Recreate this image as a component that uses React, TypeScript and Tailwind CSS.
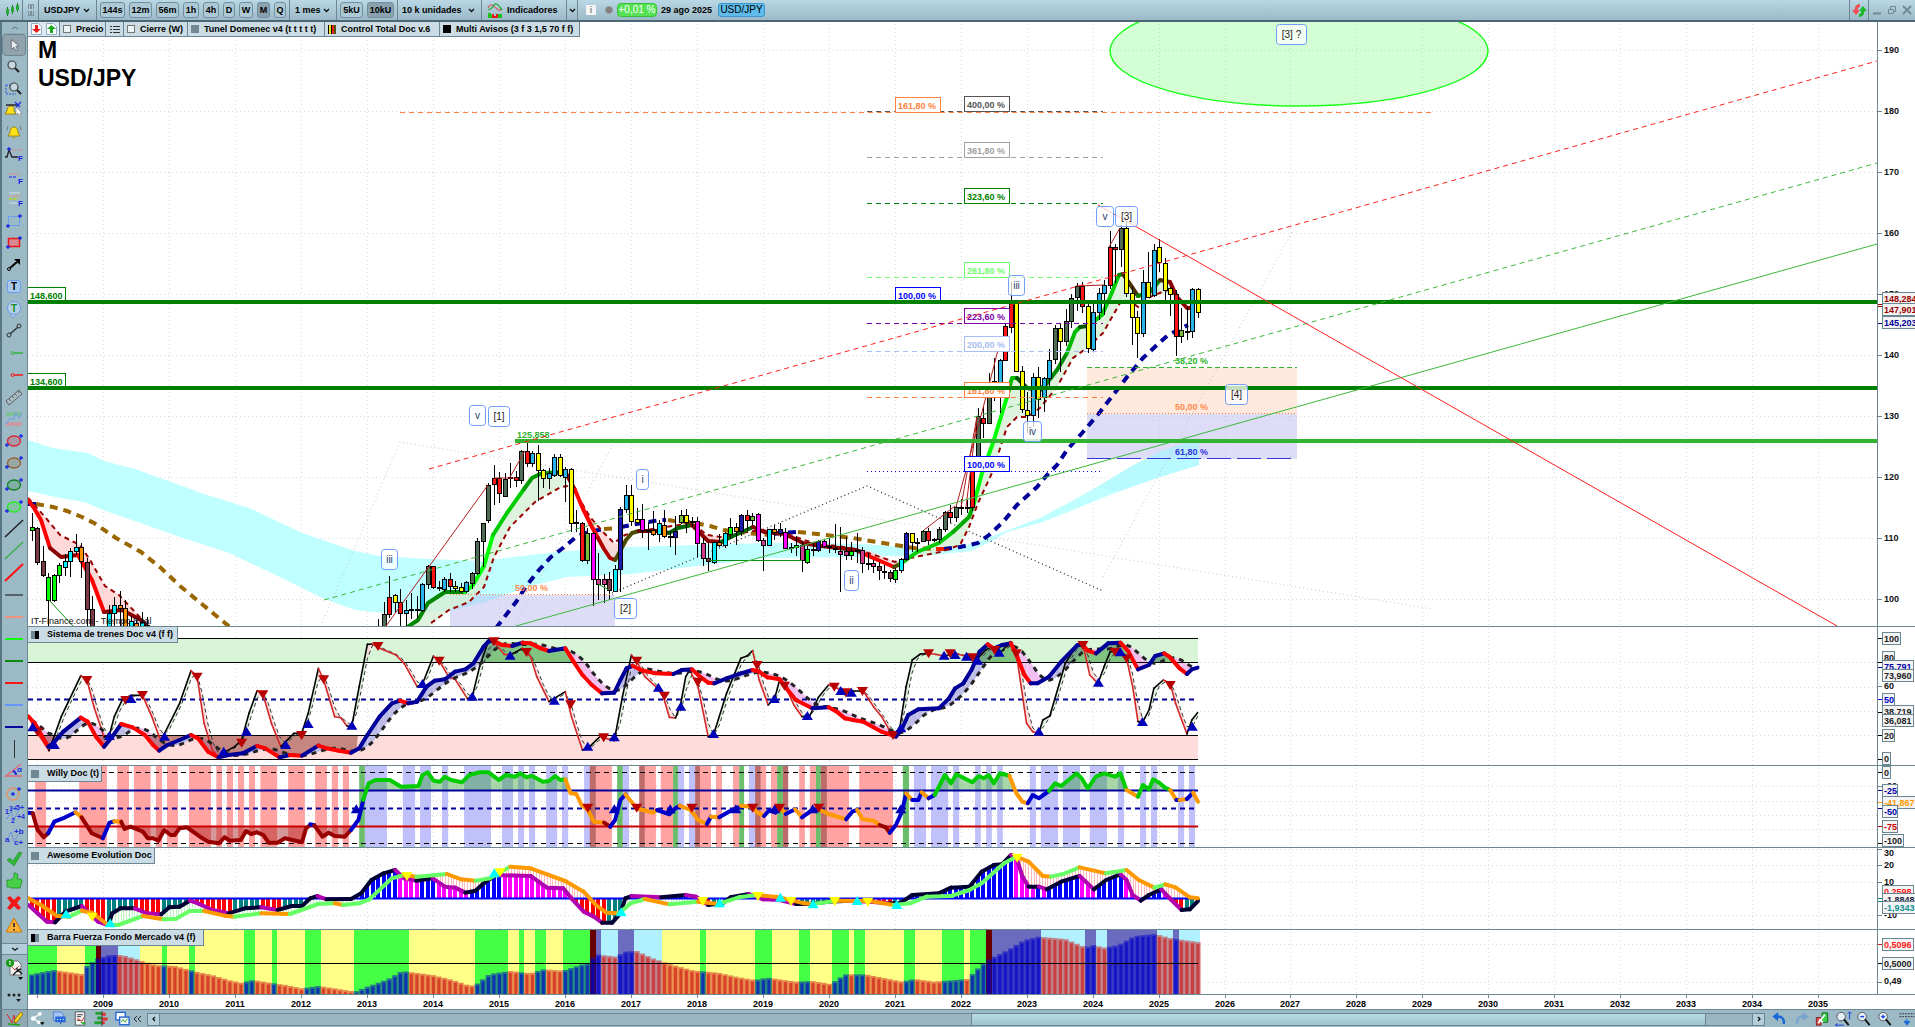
/**
 * Trading workspace: toolbar, drawing tools, price chart and four indicator panes
 */

import type { ReactNode } from 'react';

type Point = [number, number];

const LEFT = 28;
const AXIS_LEFT = 1877;
const MONTH = 5.5;
const JAN_2008 = 37.4;
const LAST_X = 1198;
const monthX = (i: number) => JAN_2008 + MONTH * i;
const yearX = (i: number) => Math.round(JAN_2008 + 65.95 * i);

/* ---------- price data ---------- */

const CANDLE_COLORS: Record<string, string> = {
  l: '#00ff00',
  m: '#7a3b46',
  c: '#00f0ff',
  o: '#ff9000',
  g: '#4f6b53',
  r: '#ff1414',
  y: '#ffff00',
  b: '#28b4ea',
  k: '#000000',
  v: '#7cbf3f',
  f: '#ff00ff',
  p: '#d13c8c',
  n: '#1b1bb0',
};

// month index, then "high top bottom low color" per candle
const CANDLES: [number, string][] = [
  [
    -1,
    '513 527 530 541 l|527 528 562 565 m|546 561 575 577 m|573 577 600 626 l|574 575 600 602 l|563 565 575 583 l|554 561 567 576 c|548 551 561 577 c|534 547 551 555 c|543 547 561 578 o|558 562 609 626 m|596 609 640 640 m',
  ],
  [
    13,
    '605 613 640 640 c|597 605 613 640 c|591 605 608 640 o|600 608 640 640 o|616 621 640 640 c|620 623 640 640 o|612 622 640 640 c|617 625 640 640 m',
  ],
  [
    62,
    '619 630 640 640 k|602 614 640 640 g|576 597 614 618 r|594 595 602 612 y|589 602 613 628 r|600 610 613 626 b|593 609 610 619 k|596 609 610 619 k|583 584 610 612 b|565 566 584 589 g|566 566 587 589 r|581 587 588 591 k|577 579 589 592 b|573 579 586 592 r|581 586 588 592 y|583 587 591 593 y|581 582 591 593 b|572 573 583 589 g|538 541 573 575 g|523 523 541 567 g|483 485 520 523 g|465 478 484 505 r|472 478 493 503 r|473 479 496 497 g|463 477 478 488 k|471 477 480 487 r|450 451 480 484 g|443 451 463 467 r|451 453 463 467 b|445 453 470 501 y|469 470 478 488 y|468 473 478 489 b|454 457 475 477 b|454 457 475 477 y|467 469 477 502 b|468 469 523 532 y|510 522 523 532 k|522 523 560 562 r|528 533 560 564 v|532 533 579 606 f|553 579 584 600 p|574 579 584 603 p|572 579 590 600 m|565 569 591 592 c|507 509 569 592 n|485 495 509 513 b|485 495 521 526 y|508 519 522 524 y|504 519 530 538 f|522 530 531 550 k|511 530 534 536 o|520 523 534 542 c|510 525 536 538 o|531 536 537 547 k|516 531 537 555 n|510 515 522 524 v|509 515 522 533 y|517 521 522 527 k|517 521 543 557 f|538 543 558 566 p|543 558 561 571 m|542 542 562 564 c|534 542 545 547 o|532 533 545 548 c|518 527 534 539 l|523 527 531 545 o|514 515 531 536 n|510 515 520 530 r|513 516 520 525 v|513 514 540 542 f|538 540 545 571 p|529 529 545 546 c|525 529 532 540 o|523 529 533 537 n|528 532 548 549 f|543 547 548 553 k|536 545 547 556 l|542 545 560 572 p|546 549 562 564 l|543 549 550 556 k|540 541 550 552 n|539 541 546 548 f|538 546 547 553 o|524 548 549 553 o|527 551 554 592 p|537 551 555 560 p|542 551 555 560 l|533 550 551 563 k|547 550 563 573 p|553 563 564 570 k|560 563 566 573 p|562 566 570 580 m|565 571 572 579 k|570 572 578 582 m|568 570 579 583 l|558 559 570 573 c|532 533 559 561 n|533 533 542 552 y|538 542 543 552 k|530 531 541 542 g|528 531 540 545 r|538 539 540 542 b|527 529 539 543 g|511 512 529 532 g|505 512 517 523 r|506 507 517 522 g|499 507 508 515 k|500 507 508 513 k|455 466 507 511 r|408 416 466 470 g|407 418 423 438 r|373 382 423 424 g|358 381 382 401 k|359 360 391 413 b|323 326 360 361 r|282 302 327 333 r|302 303 371 372 y|366 371 409 413 y|392 410 415 433 y|373 377 415 427 b|367 377 399 418 y|377 378 397 412 b|349 360 378 387 b|325 328 359 364 g|324 328 341 372 y|309 321 341 346 g|294 298 321 328 g|283 286 297 311 g|282 286 306 313 r|303 306 348 353 y|303 312 349 351 b|288 293 312 320 b|280 285 293 315 b|231 247 285 289 r|244 247 249 283 r|225 228 249 267 g|221 228 293 297 y|287 293 317 345 y|311 317 333 358 y|270 282 333 337 b|252 282 297 298 y|244 250 295 297 b|239 247 262 272 y|258 263 290 300 y|287 288 294 316 y|290 294 336 356 r|308 330 336 343 v|307 331 332 340 k|288 289 331 338 b|288 289 312 318 y',
  ],
];

const FAST_MA: [string, string][] = [
  ['#ff0000', '28,500 34,508 41,520 50,548'],
  ['#8b0000', '50,548 61,557 78,555'],
  ['#ff0000', '78,555 92,580 104,612'],
  ['#8b0000', '104,612 122,610 141,620 149,628'],
  ['#008800', '403,630 418,620 428,603 445,592 465,592'],
  ['#00ff00', '465,592 473,585 484,566 493,535'],
  ['#00cc00', '493,535 507,513 524,489'],
  ['#009900', '524,489 532,478 540,474 556,472'],
  ['#005500', '556,472 567,475'],
  ['#8b0000', '567,475 575,490'],
  ['#ff0000', '575,490 583,509 592,527 598,538'],
  ['#b00000', '598,538 604,549 610,558 615,560'],
  ['#4a4a00', '615,560 618,555 626,540 632,533 639,531'],
  ['#6b0000', '639,531 660,531 669,533'],
  ['#006600', '669,533 678,528 692,525'],
  ['#8b0000', '692,525 697,530 708,541 721,542'],
  ['#006600', '721,542 731,537 753,527'],
  ['#8b0000', '753,527 764,532 785,534 803,543 821,546 856,550 862,553'],
  ['#ff0000', '862,553 871,557 894,567'],
  ['#4a4a00', '894,567 900,564'],
  ['#00cc00', '900,564 906,560 917,552 939,543 953,532'],
  ['#00aa00', '953,532 969,517 974,503'],
  ['#00ff00', '974,503 982,473 993,443 1007,397'],
  ['#00bb00', '1007,397 1012,378 1017,378'],
  ['#005500', '1017,378 1027,388 1040,390 1047,383'],
  ['#008800', '1047,383 1057,370 1067,353'],
  ['#00bb00', '1067,353 1075,332 1080,327'],
  ['#005500', '1080,327 1088,326'],
  ['#00cc00', '1088,326 1102,315 1110,297 1119,275'],
  ['#008800', '1119,275 1123,274'],
  ['#4a3000', '1123,274 1132,287 1138,296'],
  ['#008800', '1138,296 1150,292 1160,280'],
  ['#4a3000', '1160,280 1170,282'],
  ['#8b0000', '1170,282 1177,297 1187,308 1193,308'],
];

const SLOW_MA = [
  '28,498 45,517 60,535 80,545 90,560 105,586 119,595 135,612 150,628',
  '431,623 449,610 469,602 484,587 494,557 510,527 535,502 561,487 567,486 580,500 590,517 604,533 614,543 625,535 639,531 692,523 707,535 721,537 740,533 762,530 790,535 810,542 856,549 895,562 910,558 940,552 960,545 969,527 978,503 992,473 1007,427 1017,417 1027,417 1040,408 1057,387 1073,358 1087,348 1103,333 1120,303 1133,303 1138,307 1150,297 1167,290 1173,292 1180,303',
];

const MA_FILLS: [string, string][] = [
  ['#ffd0d0', '28,500 41,520 50,548 61,557 78,555 92,580 104,612 122,610 149,628 150,628 135,612 119,595 105,586 90,560 80,545 60,535 45,517'],
  ['#d6f0d6', '403,630 418,620 428,603 445,592 465,592 484,566 493,535 524,489 540,474 567,475 567,486 561,487 535,502 510,527 494,557 484,587 469,602 449,610 425,630'],
  ['#ffd0d0', '567,475 583,509 604,549 615,560 622,545 614,543 604,533 590,517 580,498'],
  ['#ffd0d0', '697,527 708,541 721,542 731,537 721,536 707,535'],
  ['#ffd0d0', '856,550 871,557 894,567 902,560 895,562 870,551'],
  ['#d6f0d6', '906,560 939,543 969,517 974,503 993,443 1007,397 1012,378 1017,378 1027,388 1047,383 1067,353 1080,327 1088,326 1102,315 1123,274 1138,296 1133,303 1120,303 1103,333 1087,348 1073,358 1057,387 1040,408 1027,417 1017,417 1007,427 992,473 978,503 969,527 960,545 940,552'],
  ['#d6f0d6', '1138,296 1150,292 1160,280 1170,282 1173,292 1150,297'],
];

const TUNNEL: [string, string][] = [
  ['#996600', '36,504 53,507 67,511 82,517 94,523 116,538 141,552 161,568 180,586 214,614 231,628'],
  ['#000099', '28,504 37,504'],
  ['#000099', '496,628 516,602 527,585 539,570 551,557 563,548 576,537 588,532 604,529'],
  ['#996600', '604,529 618,528'],
  ['#000099', '621,527 631,525 660,520 666,520'],
  ['#996600', '668,520 674,521 689,522 710,526 724,530 746,533 769,535'],
  ['#000099', '774,534 781,533 797,532'],
  ['#996600', '798,532 817,534 853,538 889,544 914,548 935,549'],
  ['#ee2200', '936,549 944,549'],
  ['#000099', '944,549 960,547 978,543 989,535 1003,522 1017,505 1037,487 1047,475 1057,465 1067,450 1083,432 1100,412 1117,390 1127,377 1143,358 1157,345 1168,335 1188,325'],
];

const CYAN_BAND =
  '28,440 53,448 88,453 104,461 135,469 171,482 204,494 249,508 302,533 355,551 380,556 429,559 482,561 522,556 567,551 631,547 767,543 817,543 864,544 903,547 939,551 974,543 1003,532 1040,518 1070,502 1097,487 1130,467 1157,453 1199,438 1199,465 1160,477 1117,492 1073,510 1040,523 1007,532 992,541 971,551 935,555 889,556 864,557 767,558 689,567 631,574 567,577 527,587 486,602 449,611 384,613 355,610 322,598 286,580 229,553 180,537 143,524 106,511 84,502 61,498 28,491';

const FIB_LEVELS = [
  { label: '400,00 %', y: 111, color: '#555555', dash: '5 4' },
  { label: '361,80 %', y: 157, color: '#a0a0a0', dash: '5 4' },
  { label: '323,60 %', y: 203, color: '#008000', dash: '5 4' },
  { label: '261,80 %', y: 277, color: '#70ff70', dash: '5 4' },
  { label: '223,60 %', y: 323, color: '#7b00a8', dash: '5 4' },
  { label: '200,00 %', y: 351, color: '#a9bdf5', dash: '5 4' },
  { label: '161,80 %', y: 397, color: '#ff7f40', dash: '5 4' },
  { label: '100,00 %', y: 471, color: '#0000ff', dash: '1 3' },
];

const WAVES: [string, number, number, number][] = [
  ['[3] ?', 1276, 24, 30],
  ['v', 1096, 206, 17],
  ['[3]', 1115, 206, 22],
  ['iii', 1008, 275, 16],
  ['iv', 1023, 421, 18],
  ['[4]', 1225, 384, 22],
  ['ii', 844, 570, 14],
  ['i', 636, 469, 12],
  ['[2]', 614, 598, 22],
  ['v', 469, 405, 16],
  ['[1]', 488, 406, 21],
  ['iii', 381, 549, 16],
];

/* ---------- indicator data ---------- */

// Indicator series come in two halves, on a grid of 2.45 units per px across and 3 down
const toPoints = (raw: string, ox: number): Point[] =>
  raw.split(' ').map((p) => {
    const [x, y] = p.split(',').map(Number);
    return [ox + x / 2.45, 620 + y / 3];
  });

const series = (a: string, b: string): Point[] => [
  ...toPoints(a, 0).filter((p) => p[0] < 620),
  ...toPoints(b, 600).filter((p) => p[0] >= 620),
];

const sample = (line: Point[]): Point[] => {
  const out: Point[] = [];
  for (let i = -1; i <= 211; i++) {
    const x = monthX(i);
    const k = line.findIndex((p) => p[0] >= x);
    if (k === -1) {
      out.push([x, line[line.length - 1][1]]);
    } else if (k === 0) {
      out.push([x, line[0][1]]);
    } else {
      const [x0, y0] = line[k - 1];
      const [x1, y1] = line[k];
      out.push([x, y0 + ((y1 - y0) * (x - x0)) / (x1 - x0 || 1)]);
    }
  }
  return out;
};

const average = (line: Point[], n: number): Point[] =>
  line.map(([x], i) => {
    const part = line.slice(Math.max(0, i - n + 1), i + 1);
    return [x, part.reduce((sum, p) => sum + p[1], 0) / part.length];
  });

const str = (pts: Point[]) => pts.map((p) => `${p[0].toFixed(1)},${p[1].toFixed(1)}`).join(' ');

const STOCH_FAST = series(
  '70,285 80,315 92,340 120,392 150,290 198,167 213,180 230,260 255,352 268,345 280,290 300,238 322,226 349,226 372,290 390,350 395,360 440,250 468,152 483,170 500,310 520,390 535,410 548,398 575,380 592,360 610,280 630,212 644,222 665,310 688,380 720,340 739,340 755,280 780,145 793,180 820,290 835,293 850,318 862,318 880,200 900,73 912,72 930,85 970,105 990,130 1022,200 1035,192 1062,108 1080,130 1100,172 1115,178 1145,236 1157,230 1175,140 1195,68 1210,65 1235,103 1250,105 1280,85 1300,110 1315,170 1345,245 1385,215 1400,290 1427,390 1440,385 1470,350 1505,362 1525,230 1547,105 1560,120',
  '0,345 35,362 55,230 77,105 90,125 110,170 145,210 155,230 170,292 185,294 198,250 210,170 220,150 240,200 265,350 278,345 310,220 345,115 360,108 374,92 390,180 412,255 428,235 440,180 455,200 475,255 495,290 515,285 535,232 560,195 575,200 600,220 620,213 645,213 670,260 690,290 718,350 735,320 750,200 765,120 785,102 805,100 845,108 870,100 900,110 925,115 945,90 960,80 980,100 1005,65 1020,100 1045,310 1060,335 1075,340 1085,300 1102,288 1140,130 1170,72 1183,72 1200,165 1220,190 1235,140 1250,95 1275,95 1290,115 1305,200 1318,305 1330,305 1345,270 1357,205 1380,180 1397,190 1410,250 1438,342 1450,300 1464,278',
);

const STOCH_SLOW = series(
  '70,290 85,310 118,380 130,370 155,335 198,293 215,305 235,350 255,380 275,350 297,312 325,322 355,345 375,375 390,392 410,375 440,360 468,345 485,355 510,395 535,412 560,405 595,400 630,378 650,385 685,412 710,405 740,407 780,377 800,385 830,392 860,398 880,385 900,345 930,290 960,250 980,242 1000,250 1022,245 1045,200 1065,182 1090,178 1115,155 1140,148 1160,130 1185,80 1197,64 1210,62 1230,75 1255,78 1280,68 1300,70 1325,85 1345,93 1385,85 1405,125 1427,165 1450,195 1475,220 1505,218 1520,180 1535,145 1550,137',
  '35,218 50,180 65,145 80,137 100,150 135,160 180,162 200,150 225,148 245,170 265,188 280,190 310,175 345,160 374,150 390,155 410,172 440,178 460,210 480,240 520,265 560,262 580,275 600,295 620,300 645,305 670,322 690,335 725,350 740,325 755,285 780,268 830,265 855,235 870,205 890,190 910,150 930,95 950,73 965,85 985,75 1007,70 1022,110 1040,165 1055,190 1072,190 1100,170 1130,125 1170,75 1183,75 1195,92 1215,100 1245,70 1275,68 1295,95 1318,148 1345,135 1360,108 1382,100 1395,110 1420,145 1438,162 1450,148 1464,143',
);

const STOCH_DOWN = [
  ...toPoints('92,335 213,180 308,240 349,225 483,170 592,368 644,223 739,345 793,178 926,78 1076,122 1210,64 1290,96 1398,253 1479,352', 0),
  ...toPoints('90,122 158,227 240,185 385,135 452,197 574,200 602,217 643,213 718,345 805,100 858,100 912,112 967,90 1020,100 1183,75 1262,95 1290,115 1397,195', 600),
];
const STOCH_UP = [
  ...toPoints('80,322 133,375 268,348 321,237 403,350 548,395 604,335 700,375 755,312 862,317 1035,192 1157,230 1250,107 1358,242 1440,380 1505,352', 0),
  ...toPoints('143,203 198,260 278,342 427,237 508,288 590,213 616,218 737,325 843,107 870,105 898,110 925,122 978,98 1075,335 1221,188 1275,97 1329,306 1451,320', 600),
];

const BAND_COLORS: Record<string, string> = { r: '#ffa3a3', g: '#6bbf6b', b: '#c0c0fb', d: '#bd6b6b' };
const WILLY_BANDS: [number, string][] = [
  [
    0,
    'r86-113 r194-262 r287-316 r328-369 r382-397 r409-436 r463-517 r530-544 r556-571 r583-598 r610-625 r638-679 r706-747 r772-801 r813-828 r840-855 g880-894 b894-948 b987-1017 b1029-1056 b1083-1098 b1137-1203 b1230-1257 b1269-1284 b1296-1311 b1338-1365 b1377-1392 b1431-1446 d1445-1460 r1460-1499',
  ],
  [
    600,
    'g42-56 b56-71 d96-110 r110-137 r149-179 g179-191 b191-206 b218-233 d233-245 r245-272 r284-299 r326-341 g341-353 b365-380 d380-394 r394-407 r419-434 g434-448 d448-461 r488-502 r514-529 g529-541 d541-556 r556-610 r635-718 g742-757 b769-799 b811-853 b865-880 b919-933 b946-960 b973-987 b1053-1068 b1080-1122 b1134-1176 b1200-1242 b1269-1284 b1323-1338 b1350-1365 b1416-1431 b1443-1458',
  ],
];

const WILLY_COLORS: Record<string, string> = { d: '#990000', b: '#0000cc', o: '#ff9900', g: '#00cc00' };
const WILLY_LINE: [number, string][] = [
  [
    0,
    'b:70,578 80,580|d:80,580 92,630 107,652 118,640|b:118,640 133,605 160,592 185,577|o:185,577 200,592|d:200,592 225,640 252,655|b:252,655 268,608 280,604|o:280,604 297,605|d:297,605 305,627 320,620 350,635 362,655 375,655 388,662 402,630 418,645 428,645 440,625 458,622 490,650 510,665 537,670 550,652 563,662 590,660 603,633 615,642 630,637 645,645 658,668 680,668 698,655 740,667 750,625 760,615|b:760,613 770,616|d:770,616 790,650 805,638 820,648 845,650 860,630|b:860,630 878,600 890,540|g:890,540 903,490 920,480 955,480 983,500 1025,498 1035,465 1048,457 1062,482 1078,485 1090,470 1105,480 1132,487 1150,465 1175,457 1197,457 1222,480 1240,465 1262,470 1275,460 1290,472 1303,467 1330,485 1345,483 1360,468 1373,480 1385,478|o:1385,478 1398,520 1412,522 1425,555 1440,570 1455,605 1480,608|d:1480,608 1495,620|b:1495,620 1507,600 1520,540 1533,523',
  ],
  [
    600,
    'o:62,523 90,565 130,578 140,570|b:140,570 170,583 185,565 195,557|o:195,557 222,570 240,600 262,612|b:262,612 272,590|o:272,590 292,592|b:292,592 320,572 345,560|o:345,557 370,560 388,580 402,588|b:402,588 415,570 430,578 440,560|o:440,560 455,582|b:455,582 478,568|o:478,568 495,592|b:495,592 520,570 540,570|o:540,570 560,582 603,598|b:603,598 618,575 630,570|o:630,570 643,597 670,602 685,615|d:685,615 700,622 710,638|b:710,638 725,615 740,575 750,520|o:750,520 765,540|b:765,540 780,540 788,517|o:788,517 805,535|b:805,535 820,525|g:820,525 845,465 860,490 873,463 890,473 912,487 928,468 940,475 952,465 965,490 980,460 1003,467|o:1003,467 1020,520 1035,545 1048,550|b:1048,550 1060,525 1075,535 1100,513|g:1100,513 1115,490 1130,498 1168,460 1180,475 1195,505 1215,470 1235,460 1262,470 1275,460 1290,510|o:1290,510 1318,530|g:1318,530 1330,495 1345,508 1355,478 1370,488 1385,503 1397,510|o:1397,510 1412,540|b:1412,540 1420,540|o:1420,540 1438,537|b:1438,537 1453,518|o:1453,518 1465,545',
  ],
];
const WILLY_UP = [...toPoints('873,568 1505,568', 0), ...toPoints('172,568 333,568 428,568 521,568 737,568', 600)];
const WILLY_DOWN = [...toPoints('1440,563', 0), ...toPoints('90,563 225,563 374,563 440,563 536,563', 600)];

const AWESOME_FAST = series(
  '70,855 92,880 115,905 135,907 160,875 200,858 215,875 240,905 265,915 275,880 295,865 330,865 360,880 395,883 415,862 440,860 465,842 485,850 520,870 560,880 600,865 640,862 680,870 715,858 740,858 760,835 778,828 800,838 860,837 885,820 910,780 940,760 968,750 990,775 1020,782 1060,775 1090,800 1115,803 1140,818 1165,812 1185,790 1215,765 1300,768 1340,803 1380,805 1400,835 1430,875 1455,890 1475,908 1500,908 1520,885',
  '50,880 62,835 77,828 150,832 210,825 235,830 265,855 300,850 320,832 365,822 400,838 440,840 480,852 510,852 560,845 610,842 660,845 710,850 735,850 765,825 830,820 860,803 905,800 935,755 965,735 985,733 1007,705 1020,712 1035,770 1050,800 1075,800 1095,808 1130,785 1175,768 1190,785 1210,808 1240,780 1275,763 1290,780 1305,825 1325,842 1345,825 1375,808 1400,840 1425,870 1445,868 1465,843',
);
const AWESOME_SLOW = series(
  '70,835 100,855 140,888 170,890 200,872 225,878 265,915 290,915 350,888 400,898 430,897 465,873 500,873 550,887 575,890 640,880 710,882 780,852 820,850 840,855 880,850 905,838 960,775 990,765 1020,770 1095,762 1130,778 1165,782 1200,775 1250,740 1300,745 1385,783 1430,815 1460,855 1485,878 1515,880',
  '50,877 75,850 110,837 170,853 240,845 290,852 340,832 385,825 440,832 500,850 520,852 580,842 660,843 720,855 760,850 800,830 860,828 905,810 935,790 990,730 1020,710 1050,725 1085,768 1105,770 1135,762 1175,742 1240,760 1290,750 1320,780 1358,803 1385,793 1410,802 1445,832 1465,835',
);
const AWESOME_DOWN = [...toPoints('226,890 997,768 1225,757', 0), ...toPoints('252,843 387,828 468,843 575,843 656,845 1022,713', 600)];
const AWESOME_UP = [...toPoints('162,883 270,910 1211,760 1522,877', 0), ...toPoints('293,850 442,833 522,853 630,843 727,855', 600)];

const FORCE_COLORS: Record<string, string> = { g: '#44ff44', y: '#ffff88', d: '#660000', p: '#6b6bc0', c: '#b0f0ff' };
// each entry is a color and where its band ends
const FORCE_BANDS: [number, string][] = [
  [
    0,
    'g140 y208 g235 d247 p289 c343 y397 g409 y463 g478 y598 g625 y666 g679 y747 g786 y867 g1002 y1164 g1245 y1271 g1284 y1311 g1338 y1380 g1446 d1460 p1472 c1514 p1553',
  ],
  [
    600,
    'p83 c152 y245 g260 y380 g421 y488 g514 y568 g610 y622 g649 y745 g772 y838 g892 y906 g946 d960 p1080 c1188 p1215 c1242 p1365 c1404 p1419 c1470',
  ],
];
const FORCE = series(
  '70,1065 130,1050 200,1062 210,1040 240,1015 270,1005 300,1005 340,1020 380,1035 430,1038 480,1055 520,1065 560,1080 590,1088 620,1080 660,1088 700,1095 740,1105 780,1098 820,1105 870,1115 900,1100 950,1078 985,1053 1060,1065 1110,1080 1150,1097 1165,1095 1200,1062 1250,1053 1300,1060 1330,1048 1380,1052 1420,1035 1440,1030 1460,1003 1510,1010',
  '40,1010 60,995 90,993 130,1015 170,1032 230,1052 290,1058 340,1072 380,1080 410,1073 480,1085 520,1083 565,1092 600,1063 650,1063 700,1075 740,1085 770,1077 820,1085 900,1077 930,1040 950,1020 1000,990 1040,960 1075,950 1140,957 1190,982 1210,975 1235,983 1270,975 1310,948 1360,942 1400,955 1470,967',
);

/* ---------- shared chart parts ---------- */

interface PaneProps {
  top: number;
  className: string;
  axis: ReactNode;
  children: ReactNode;
  overlay?: ReactNode;
}

function Pane({ top, className, axis, children, overlay }: PaneProps) {
  return (
    <section className={`flex border-b border-[#6b8792] ${className}`}>
      <div className="relative min-w-0 flex-1 overflow-hidden">
        <svg className="absolute inset-0 h-full w-full" aria-hidden="true">
          <g transform={`translate(${-LEFT} ${-top})`}>{children}</g>
        </svg>
        {overlay}
      </div>
      <div className="w-[38px] shrink-0 overflow-hidden border-l border-[#6b8792]">
        <svg className="block h-full w-full">
          <g transform={`translate(${-AXIS_LEFT - 1} ${-top})`}>{axis}</g>
        </svg>
      </div>
    </section>
  );
}

function PaneTitle({ icon, width, children }: { icon: string; width: string; children: ReactNode }) {
  return (
    <h2
      className={`absolute left-0 top-0 flex h-4 items-center gap-2 border-b border-r border-[#6b8792] bg-[#cbdce4] pl-[3px] text-[9px] font-bold ${width}`}
    >
      <span className={`h-2 w-2 ${icon}`} />
      {children}
    </h2>
  );
}

function Grid({ rows }: { rows: number[] }) {
  return (
    <g stroke="#dcdcdc" strokeDasharray="1 3" shapeRendering="crispEdges">
      {Array.from({ length: 28 }, (_, i) => (
        <line key={i} x1={yearX(i) + 0.5} x2={yearX(i) + 0.5} y1="0" y2="1027" />
      ))}
      {rows.map((y) => (
        <line key={y} x1="28" x2="3000" y1={y + 0.5} y2={y + 0.5} />
      ))}
    </g>
  );
}

function Level({ y, color, width = 1, dash }: { y: number; color: string; width?: number; dash?: string }) {
  return <line x1={LEFT} x2={LAST_X} y1={y + 0.5} y2={y + 0.5} stroke={color} strokeWidth={width} strokeDasharray={dash} />;
}

function Markers({ at, dir, color }: { at: Point[]; dir: 'up' | 'down'; color: string }) {
  return (
    <g fill={color}>
      {at.map(([x, y], i) => (
        <path key={i} d={dir === 'up' ? `M${x - 5.5} ${y + 4}h11l-5.5 -9z` : `M${x - 5.5} ${y - 4}h11l-5.5 9z`} />
      ))}
    </g>
  );
}

// Line that changes color with its direction
function SlopeLine({ line, up, down, width }: { line: Point[]; up: string; down: string; width: number }) {
  return (
    <g fill="none" strokeWidth={width} strokeLinecap="round">
      {line.slice(1).map((p, i) => (
        <line key={i} x1={line[i][0]} y1={line[i][1]} x2={p[0]} y2={p[1]} stroke={p[1] <= line[i][1] ? up : down} />
      ))}
    </g>
  );
}

function Between({ a, b, up, down }: { a: Point[]; b: Point[]; up: string; down: string }) {
  return (
    <g>
      {a.slice(1).map((p, i) => (
        <polygon key={i} points={str([a[i], p, b[i + 1], b[i]])} fill={p[1] <= b[i + 1][1] ? up : down} />
      ))}
    </g>
  );
}

function Tick({ y, label, color = '#111', mark = '#6b8792', dy = 3 }: { y: number; label?: string; color?: string; mark?: string; dy?: number }) {
  return (
    <g>
      <line x1="1877" x2="1882" y1={y + 0.5} y2={y + 0.5} stroke={mark} />
      {label && (
        <text x="1884" y={y + dy} fontSize="9" fontWeight="bold" fill={color}>
          {label}
        </text>
      )}
    </g>
  );
}

function Tag({ y, label, color = '#222', width }: { y: number; label: string; color?: string; width: number }) {
  return (
    <g>
      <rect x="1882.5" y={y + 0.5} width={width} height="12" fill="#f4f4f4" stroke="#6b8792" />
      <text x="1884" y={y + 10} fontSize="9" fontWeight="bold" fill={color}>
        {label}
      </text>
    </g>
  );
}

/* ---------- price pane ---------- */

function Candles() {
  return (
    <g shapeRendering="crispEdges" stroke="#000">
      {CANDLES.flatMap(([start, raw]) =>
        raw.split('|').map((row, k) => {
          const [high, top, bottom, low, color] = row.split(' ');
          const x = Math.round(monthX(start + k));
          return (
            <g key={start + k}>
              <line x1={x + 0.5} x2={x + 0.5} y1={Number(high)} y2={Number(low)} />
              <rect
                x={x - 1.5}
                y={Number(top) + 0.5}
                width="4"
                height={Math.max(1, Number(bottom) - Number(top))}
                fill={CANDLE_COLORS[color]}
              />
            </g>
          );
        }),
      )}
    </g>
  );
}

function PriceBox({ x, y, label, color }: { x: number; y: number; label: string; color: string }) {
  return (
    <g>
      <rect x={x + 0.5} y={y - 15.5} width="45" height="15" fill="#fff" stroke={color} />
      <text x={x + 3} y={y - 4} fontSize="9" fontWeight="bold" fill={color}>
        {label}
      </text>
    </g>
  );
}

function LevelBox({ y, label }: { y: number; label: string }) {
  return (
    <g>
      <rect x="27.5" y={y - 15.5} width="38" height="15" fill="#fff" stroke="#008000" />
      <text x="30" y={y - 4} fontSize="9" fontWeight="bold" fill="#008000">
        {label}
      </text>
    </g>
  );
}

function PriceChart() {
  return (
    <>
      <Grid rows={[50, 111, 172, 233, 294, 355, 416, 477, 538, 599]} />
      <ellipse cx="1299" cy="51" rx="189" ry="55" fill="#00ff00" fillOpacity="0.17" stroke="#19ff19" strokeWidth="1.5" />
      <polygon points={CYAN_BAND} fill="#bfffff" />
      <rect x="450" y="595" width="165" height="32" fill="#b4b4f0" fillOpacity="0.45" />
      <rect x="1087" y="368" width="210" height="46" fill="#ffe9dd" />
      <rect x="1087" y="414" width="210" height="45" fill="#b4b4f0" fillOpacity="0.45" />
      <path d="M1199 438L1157 453L1130 467L1097 487L1117 492L1160 477L1199 465z" fill="#b4f6fd" fillOpacity="0.6" />

      <g fill="none" stroke="#c4c4c4" strokeWidth="1" strokeDasharray="1 3">
        <path d="M322 623L400 442L1433 609" />
        <path d="M515 625L614 443" />
        <path d="M1103 577L1292 232" />
      </g>
      <path d="M612 593L867 486L1103 591" fill="none" stroke="#222" strokeWidth="1.2" strokeDasharray="1 3" />

      {MA_FILLS.map(([color, points], i) => (
        <polygon key={i} points={points} fill={color} fillOpacity="0.8" />
      ))}
      <g fill="none" strokeWidth="4" strokeDasharray="8 6">
        {TUNNEL.map(([color, points], i) => (
          <polyline key={i} points={points} stroke={color} />
        ))}
      </g>
      <g fill="none" stroke="#990000" strokeWidth="2" strokeDasharray="5 4">
        {SLOW_MA.map((points, i) => (
          <polyline key={i} points={points} />
        ))}
      </g>
      <g fill="none" strokeWidth="4" strokeLinecap="round" strokeLinejoin="round">
        {FAST_MA.map(([color, points], i) => (
          <polyline key={i} points={points} stroke={color} />
        ))}
      </g>

      <Candles />

      <g fill="none" stroke="#b01c1c">
        <path d="M386 626L488 485M494 478H516M510 477L525 451M924 530L955 506M956 507L982 412L998 350M961 507L977 416M966 507L977 418M1076 286L1104 285M1109 247L1120 228" />
      </g>
      <g fill="none" stroke="#109010">
        <path d="M49 600L73 626M598 584L609 590M710 560.5H802" />
      </g>

      <line x1="400" x2="1433" y1="112.5" y2="112.5" stroke="#ff7f40" strokeDasharray="5 4" />
      {FIB_LEVELS.map(({ label, y, color, dash }) => (
        <g key={y}>
          <line x1="867" x2="1103" y1={y + 0.5} y2={y + 0.5} stroke={color} strokeDasharray={dash} />
          <PriceBox x={964} y={y + 1} label={label} color={color} />
        </g>
      ))}
      <PriceBox x={895} y={113} label="161,80 %" color="#ff7f40" />
      <PriceBox x={895} y={303} label="100,00 %" color="#0000ff" />

      <g fontSize="9" fontWeight="bold">
        <line x1="450" x2="615" y1="594.5" y2="594.5" stroke="#ff7f40" strokeDasharray="1 2" />
        <text x="515" y="591" fill="#ff8a4c">50,00 %</text>
        <line x1="1087" x2="1297" y1="367.5" y2="367.5" stroke="#2cb52c" strokeDasharray="5 3" />
        <text x="1175" y="364" fill="#2cb52c">38,20 %</text>
        <line x1="1087" x2="1297" y1="413.5" y2="413.5" stroke="#ff7f40" strokeDasharray="1 2" />
        <text x="1175" y="410" fill="#ff8a4c">50,00 %</text>
        <line x1="1087" x2="1297" y1="458.5" y2="458.5" stroke="#3434d8" strokeDasharray="24 6" />
        <text x="1175" y="455" fill="#3434d8">61,80 %</text>
        <text x="517" y="438" fill="#2fb02f">125,858</text>
      </g>

      <LevelBox y={303} label="148,600" />
      <LevelBox y={389} label="134,600" />
      <rect x="28" y="300" width="3000" height="4" fill="#008000" />
      <rect x="28" y="386" width="3000" height="4" fill="#008000" />
      <rect x="515" y="439" width="3000" height="4" fill="#32b432" />

      <path d="M429 469L1877 61" stroke="#ff2020" strokeDasharray="5 4" />
      <path d="M324 600L1877 163" stroke="#3cb83c" strokeDasharray="5 4" />
      <path d="M516 626L1877 244" stroke="#3cb83c" />
      <path d="M1098 205L1837 626" stroke="#ff2020" />

      {WAVES.map(([label, x, y, w], i) => (
        <g key={i}>
          <rect x={x + 0.5} y={y + 0.5} width={w} height="20" rx="3" fill="#fff" fillOpacity="0.75" stroke="#6f9ff8" />
          <text x={x + 0.5 + w / 2} y={y + 14} fontSize="10" textAnchor="middle" fill={label.startsWith('[') ? '#222' : '#1c3a66'}>
            {label}
          </text>
        </g>
      ))}
      <text x="31" y="624" fontSize="9" fill="#111">IT-Finance.com - Tiempo Real</text>
    </>
  );
}

function PriceAxis() {
  return (
    <>
      {[190, 180, 170, 160, 150, 140, 130, 120, 110, 100].map((p, i) => (
        <Tick key={p} y={50 + i * 61} label={String(p)} />
      ))}
      <Tick y={304} mark="#990000" />
      <Tick y={306} mark="#990000" />
      <Tick y={323} mark="#000099" />
      <Tag y={292} label="148,284" color="#990000" width={40} />
      <Tag y={303} label="147,901" color="#990000" width={40} />
      <Tag y={316} label="145,203" color="#000099" width={40} />
    </>
  );
}

/* ---------- indicator panes ---------- */

function StochChart() {
  const fast = sample(STOCH_FAST);
  const fastLag = average(fast, 2);
  const slow = sample(STOCH_SLOW);
  const slowLag = average(slow, 5);
  return (
    <>
      <Grid rows={[662, 687, 711, 735]} />
      <rect x="28" y="638" width="1170" height="24" fill="#d8f5d8" />
      <rect x="28" y="735" width="1170" height="24" fill="#ffdcdc" />
      <Between a={fast} b={fastLag} up="#dff5df" down="#fbdcdc" />
      <Between a={slow} b={slowLag} up="#bcbce6" down="#f0bff0" />
      <clipPath id="stoch-zones">
        <rect x="480" y="638" width="720" height="24" />
        <rect x="28" y="735" width="330" height="24" />
      </clipPath>
      <g clipPath="url(#stoch-zones)">
        <polygon points={`1198,662 480,662 ${str(slow.filter((p) => p[0] > 480))}`} fill="#3a9a3a" fillOpacity="0.55" />
        <polygon points={`358,735 28,735 ${str(slow.filter((p) => p[0] < 358))}`} fill="#8a3020" fillOpacity="0.5" />
      </g>
      <Level y={638} color="#000" />
      <Level y={662} color="#000" />
      <Level y={699} color="#000099" width={2} dash="5 4" />
      <Level y={735} color="#000" />
      <Level y={759} color="#000" />
      <polyline points={str(fastLag)} fill="none" stroke="#333" strokeDasharray="4 3" />
      <SlopeLine line={STOCH_FAST} up="#000" down="#d22828" width={1.6} />
      <polyline points={str(slowLag)} fill="none" stroke="#222" strokeWidth="3" strokeDasharray="5 5" />
      <SlopeLine line={STOCH_SLOW} up="#000099" down="#ff0000" width={4} />
      <Markers at={STOCH_DOWN} dir="down" color="#b80000" />
      <Markers at={STOCH_UP} dir="up" color="#0000b8" />
    </>
  );
}

function StochAxis() {
  return (
    <>
      <Tick y={638} mark="#000" />
      <Tick y={662} mark="#000" />
      <Tick y={667} mark="#000099" />
      <Tick y={686} label="60" />
      <Tick y={699} mark="#0000ff" />
      <Tick y={712} mark="#000" />
      <Tick y={735} mark="#000" />
      <Tick y={759} mark="#000" />
      <Tag y={632} label="100" width={18} />
      <Tag y={651} label="80" width={12} />
      <Tag y={660} label="75,791" color="#0000aa" width={31} />
      <Tag y={669} label="73,960" width={31} />
      <Tag y={693} label="50" color="#0000cc" width={12} />
      <Tag y={705} label="38,719" width={31} />
      <Tag y={714} label="36,081" width={31} />
      <Tag y={729} label="20" width={12} />
      <Tag y={752} label="0" width={8} />
    </>
  );
}

function WillyChart() {
  const segments = WILLY_LINE.flatMap(([ox, raw]) =>
    raw.split('|').map((part) => ({ color: part[0], points: toPoints(part.slice(2), ox) })),
  );
  const all = str(segments.flatMap((s) => s.points));
  return (
    <>
      <Grid rows={[786, 801, 815, 829]} />
      {WILLY_BANDS.flatMap(([ox, raw]) =>
        raw.split(' ').map((band) => {
          const [from, to] = band.slice(1).split('-').map(Number);
          return (
            <rect key={ox + band} x={ox + from / 2.45} y="766" width={(to - from) / 2.45} height="82" fill={BAND_COLORS[band[0]]} />
          );
        }),
      )}
      <clipPath id="willy-high">
        <rect x="28" y="766" width="1170" height="24" />
      </clipPath>
      <clipPath id="willy-low">
        <rect x="28" y="827" width="1170" height="20" />
      </clipPath>
      <polygon points={`28,808 ${all} 1198,808`} fill="#2a9a2a" fillOpacity="0.4" clipPath="url(#willy-high)" />
      <polygon points={`28,808 ${all} 1198,808`} fill="#990000" fillOpacity="0.4" clipPath="url(#willy-low)" />
      <Level y={772} color="#000" dash="5 4" />
      <Level y={790} color="#000099" width={2} />
      <Level y={808} color="#000099" width={2} dash="5 4" />
      <Level y={826} color="#cc0000" width={2} />
      <Level y={843} color="#000" dash="5 4" />
      <g fill="none" strokeWidth="4" strokeLinecap="round" strokeLinejoin="round">
        {segments.map((s, i) => (
          <polyline key={i} points={str(s.points)} stroke={WILLY_COLORS[s.color]} />
        ))}
      </g>
      <Markers at={WILLY_UP} dir="up" color="#0000b8" />
      <Markers at={WILLY_DOWN} dir="down" color="#b80000" />
    </>
  );
}

function WillyAxis() {
  return (
    <>
      <Tick y={772} mark="#000" />
      <Tick y={786} label="-20" />
      <Tick y={790} mark="#000099" />
      <Tick y={802} mark="#ff9900" />
      <Tick y={808} mark="#000099" />
      <Tick y={826} mark="#cc0000" />
      <Tick y={843} mark="#000" />
      <Tag y={766} label="0" width={8} />
      <Tag y={784} label="-25" color="#0000aa" width={15} />
      <Tag y={796} label="-41,867" color="#ff9900" width={40} />
      <Tag y={805} label="-50" color="#0000aa" width={15} />
      <Tag y={820} label="-75" color="#cc0000" width={15} />
      <Tag y={834} label="-100" width={21} />
    </>
  );
}

function AwesomeChart() {
  const fast = sample(AWESOME_FAST);
  const slow = sample(AWESOME_SLOW);
  const zero = 898;
  return (
    <>
      <Grid rows={[849, 865, 882, 915]} />
      {fast.map(([x, y], i) => {
        const rising = i > 0 && y <= fast[i - 1][1];
        const color = y < zero ? (rising ? '#0000ff' : '#ff00ff') : rising ? '#008080' : '#ff0000';
        const left = Math.round(x) - 2;
        const top = Math.min(y, slow[i][1]);
        const height = Math.abs(y - slow[i][1]);
        const stripe = slow[i][1] < y ? '#ffb8b8' : '#c0f5c0';
        return (
          <g key={i} shapeRendering="crispEdges">
            <rect x={left} y={top} width="1" height={height} fill={stripe} />
            <rect x={left + 3} y={top} width="1" height={height} fill={stripe} />
            <rect x={left} y={Math.min(y, zero)} width="4" height={Math.abs(y - zero)} fill={color} />
          </g>
        );
      })}
      <Level y={898} color="#0000ff" width={2} />
      <SlopeLine line={AWESOME_FAST} up="#000033" down="#b000b0" width={4} />
      <SlopeLine line={AWESOME_SLOW} up="#66ff66" down="#ff9900" width={4} />
      <Markers at={AWESOME_DOWN} dir="down" color="#ffff00" />
      <Markers at={AWESOME_UP} dir="up" color="#00ffff" />
    </>
  );
}

function AwesomeAxis() {
  return (
    <>
      <Tick y={849} label="30" dy={7} />
      <Tick y={865} label="20" />
      <Tick y={882} label="10" />
      <Tick y={898} mark="#008080" />
      <Tick y={901} mark="#008080" />
      <Tick y={915} label="-10" />
      <Tag y={885} label="0,2598" color="#ff2020" width={31} />
      <Tag y={893} label="-1,8848" color="#222244" width={40} />
      <Tag y={901} label="-1,9343" color="#109090" width={40} />
    </>
  );
}

function ForceChart() {
  let from = LEFT;
  const bands = FORCE_BANDS.flatMap(([ox, raw]) =>
    raw.split(' ').map((band) => {
      const start = from;
      from = ox + Number(band.slice(1)) / 2.45;
      return { kind: band[0], start, end: from };
    }),
  );
  return (
    <>
      <Grid rows={[944, 982]} />
      <g shapeRendering="crispEdges">
        {bands.map(({ kind, start, end }, i) => (
          <rect key={i} x={start} y="930" width={Math.max(0, end - start)} height="65" fill={FORCE_COLORS[kind]} />
        ))}
      </g>
      {sample(FORCE).map(([x, y], i) => {
        const band = bands.find((b) => x < b.end);
        const strong = band !== undefined && 'gdp'.includes(band.kind);
        return (
          <g key={i} fill={strong ? '#0000c8' : '#d01010'}>
            <rect x={x - 2.75} y={y} width="5.5" height={994 - y} fillOpacity="0.5" />
            <rect x={x - 1.5} y={y + 2} width="3" height={992 - y} fillOpacity="0.6" />
          </g>
        );
      })}
      <Level y={963} color="#000" />
    </>
  );
}

function ForceAxis() {
  return (
    <>
      <Tick y={944} mark="#cc2020" />
      <Tick y={963} mark="#000" />
      <Tick y={982} label="0,49" dy={2} />
      <Tag y={938} label="0,5096" color="#ff2020" width={31} />
      <Tag y={957} label="0,5000" width={31} />
    </>
  );
}

function TimeAxis() {
  return (
    <div className="h-[14px] shrink-0 overflow-hidden">
      <svg className="block h-full w-full">
        <g transform={`translate(${-LEFT} 0)`}>
          <line x1="37.5" x2="37.5" y1="0" y2="3" stroke="#6b8792" />
          {Array.from({ length: 27 }, (_, i) => (
            <g key={i}>
              <line x1={yearX(i + 1) + 0.5} x2={yearX(i + 1) + 0.5} y1="0" y2="3" stroke="#6b8792" />
              <text x={yearX(i + 1)} y="12" fontSize="9" fontWeight="bold" textAnchor="middle">
                {2009 + i}
              </text>
            </g>
          ))}
        </g>
      </svg>
    </div>
  );
}

/* ---------- drawing tools ---------- */

const plus = (x: number, y: number) => <path d={`M${x - 2} ${y}h4M${x} ${y - 2}v4`} stroke="#1c2ce0" strokeWidth="1.3" />;

const glass = (x: number, y: number) => (
  <>
    <circle cx={x} cy={y} r="4" fill="#c4d8e0" stroke="#444" strokeWidth="1.2" />
    <path d={`M${x + 3} ${y + 3}l4 4`} stroke="#222" strokeWidth="2" />
  </>
);

const bell = (
  <>
    <path d="M12 5c3 0 4 3 4 6l2 3H6l2-3c0-3 1-6 4-6z" fill="#ffe11a" stroke="#8a7400" strokeWidth="0.8" />
    <path d="M10.5 15h3l-1.500 2z" fill="#b89800" />
  </>
);

const ellipseTool = (stroke: string) => (
  <>
    <ellipse cx="12" cy="11" rx="6.5" ry="5" fill={stroke} fillOpacity="0.2" stroke={stroke} strokeWidth="1.3" />
    {plus(5, 15)}
    {plus(19, 6)}
  </>
);

const slanted = (stroke: string, width = 1.5) => <path d="M3 19L21 2" stroke={stroke} strokeWidth={width} />;
const flat = (stroke: string, width = 2) => <path d="M3 11H21" stroke={stroke} strokeWidth={width} />;

const TOOLS: { name: string; icon: ReactNode; active?: boolean }[] = [
  { name: 'Puntero', active: true, icon: <path d="M9 5v11l3-2.500 2 4 2-1-2-4 3.500-.5z" fill="#e8eef1" stroke="#555" strokeWidth="0.8" /> },
  { name: 'Lupa', icon: glass(10, 9) },
  {
    name: 'Zoom de zona',
    icon: (
      <>
        <path d="M4 7v9h10M4 7h4" fill="none" stroke="#2a5ad8" strokeDasharray="2 1" />
        {glass(12, 9)}
      </>
    ),
  },
  {
    name: 'Alerta en objeto',
    icon: (
      <>
        <path d="M9 6c3 0 3 3 3 5l2 3H3l2-3c0-2 1-5 4-5z" fill="#ffe11a" stroke="#8a7400" strokeWidth="0.8" />
        <path d="M4 5h11" stroke="#111" strokeWidth="1.3" />
        <path d="M13 2l5 5M19 2l-5 5" stroke="#1c2ce0" strokeWidth="1.3" />
        <path d="M14 7v8l2-2 2 4 1-1-1-3h2z" fill="#fff" stroke="#777" strokeWidth="0.6" />
      </>
    ),
  },
  {
    name: 'Alertas',
    icon: (
      <>
        {bell}
        <path d="M6 4l-1 4M18 4l1 4" stroke="#777" />
      </>
    ),
  },
  {
    name: 'Extensión Fibonacci',
    icon: (
      <>
        <path d="M9 6h11" stroke="#ff6a50" strokeDasharray="1 1" />
        <path d="M3 13h2l2-7 3 7h6" fill="none" stroke="#222" strokeWidth="1.3" />
        <text x="16" y="17" fontSize="8" fontWeight="bold" fill="#1818e8">F</text>
        {plus(7, 5)}
      </>
    ),
  },
  {
    name: 'Retroceso Fibonacci',
    icon: (
      <>
        <path d="M7 8h11" stroke="#ff6a50" strokeDasharray="1 1" />
        <path d="M7 11h8" stroke="#1818e8" strokeDasharray="3 1" />
        <text x="16" y="18" fontSize="8" fontWeight="bold" fill="#1818e8">F</text>
      </>
    ),
  },
  {
    name: 'Canales Fibonacci',
    icon: (
      <>
        <path d="M7 5h11M7 15h8" stroke="#d0e4ec" />
        <path d="M7 8h11" stroke="#e8a080" />
        <path d="M7 11h9" stroke="#b8d820" strokeWidth="1.5" strokeDasharray="3 1" />
        <text x="16" y="18" fontSize="8" fontWeight="bold" fill="#1818e8">F</text>
      </>
    ),
  },
  { name: 'Rectángulo azul', icon: <><rect x="6.5" y="6.5" width="11" height="9" fill="none" stroke="#6a9cf0" />{plus(6, 16)}{plus(18, 6)}</> },
  { name: 'Rectángulo rojo', icon: <><rect x="6.5" y="6.500" width="11" height="8" fill="#d88890" stroke="#e81818" strokeWidth="1.5" />{plus(6, 15)}{plus(18, 6)}</> },
  { name: 'Flecha', icon: <><circle cx="7" cy="15" r="1.5" fill="none" stroke="#000" /><path d="M8 14l7-6" stroke="#000" strokeWidth="2" /><path d="M12 5h6v6z" fill="#000" /></> },
  { name: 'Texto', icon: <><rect x="5.5" y="4.5" width="13" height="12" rx="2" fill="#a9c8ea" stroke="#6a9cf0" /><text x="12" y="14" fontSize="10" fontWeight="bold" textAnchor="middle">T</text></> },
  { name: 'Globo de texto', icon: <><circle cx="12" cy="10" r="6.5" fill="#b4d0e4" stroke="#6a9cf0" /><path d="M9 16l1 4 4-4z" fill="#b4d0e4" stroke="#6a9cf0" strokeWidth="0.8" /><text x="12" y="14" fontSize="10" fontWeight="bold" fill="#188818" textAnchor="middle">T</text></> },
  { name: 'Segmento', icon: <><path d="M8 14l8-7" stroke="#333" strokeWidth="1.5" /><circle cx="7" cy="15" r="2" fill="none" stroke="#333" /><circle cx="17" cy="6" r="2" fill="none" stroke="#333" /></> },
  { name: 'Semirrecta verde', icon: <><circle cx="10.5" cy="11" r="1.5" fill="none" stroke="#30b040" /><path d="M12 11h9" stroke="#30b040" strokeWidth="1.5" /></> },
  { name: 'Semirrecta roja', icon: <><circle cx="10.5" cy="11" r="1.5" fill="none" stroke="#f01818" /><path d="M12 11h9" stroke="#f01818" strokeWidth="1.5" /></> },
  { name: 'Regla', icon: <path d="M4 15l13-11 3 4-13 11zM7 13l2 2M10 10l2 2M13 8l2 2M16 5l1 2" fill="#a8bcc6" stroke="#555" strokeWidth="0.9" /> },
  { name: 'Canal', icon: <><rect x="4" y="4" width="16" height="4" fill="#7fbf9a" /><rect x="4" y="14" width="16" height="4" fill="#c89aa4" /><path d="M4 16l4-6 3 2 3-7 3 5 3-5" fill="none" stroke="#6a9cf0" /></> },
  { name: 'Elipse roja', icon: ellipseTool('#e02030') },
  { name: 'Elipse marrón', icon: ellipseTool('#94602c') },
  { name: 'Elipse verde', icon: ellipseTool('#108020') },
  { name: 'Elipse lima', icon: ellipseTool('#20f020') },
  { name: 'Línea negra', icon: slanted('#222') },
  { name: 'Línea verde', icon: slanted('#38b048') },
  { name: 'Línea roja', icon: slanted('#ff1010', 2) },
  { name: 'Horizontal negra', icon: flat('#111', 1) },
  { name: 'Horizontal salmón', icon: flat('#f09080') },
  { name: 'Horizontal lima', icon: flat('#10ff10') },
  { name: 'Horizontal verde', icon: flat('#108810') },
  { name: 'Horizontal roja', icon: flat('#f81818') },
  { name: 'Horizontal azul', icon: flat('#6898ff') },
  { name: 'Horizontal marina', icon: flat('#0808a0') },
  { name: 'Vertical', icon: <path d="M12.5 2v18" stroke="#333" /> },
  { name: 'Ángulo', icon: <><path d="M19 4L4 16h16" fill="none" stroke="#e06878" strokeWidth="1.5" /><path d="M11 11q3 1 3 4" fill="none" stroke="#1c2ce0" strokeWidth="2" /><text x="15" y="12" fontSize="8" fontWeight="bold" fill="#1c2ce0">α</text></> },
  { name: 'Círculo', icon: <><circle cx="11" cy="12" r="6" fill="none" stroke="#e89060" strokeWidth="1.3" />{plus(11, 12)}{plus(17, 7)}</> },
  { name: 'Ondas 12345', icon: <><path d="M5 15l4-8 3 9 6-13" fill="none" stroke="#6080e0" strokeDasharray="2 1" /><g fontSize="7" fontWeight="bold" fill="#1c2ce0"><text x="3" y="10">1</text><text x="7" y="7">3+</text><text x="14" y="6">5+</text><text x="9" y="19">2</text><text x="15" y="15">+4</text></g></> },
  { name: 'Ondas abc', icon: <><path d="M5 14l4-8 3 9 6-8" fill="none" stroke="#6080e0" strokeDasharray="2 1" /><g fontSize="8" fontWeight="bold" fill="#1c2ce0"><text x="3" y="16">a</text><text x="12" y="8">+b</text><text x="12" y="19">c+</text></g></> },
  { name: 'Visto', icon: <path d="M5 12l3-2 3 3 6-9 3 1-8 13z" fill="#30b838" stroke="#208828" strokeWidth="0.6" /> },
  { name: 'Me gusta', icon: <path d="M5 10h4l3-3V3h2l2 2-1 4h4l1 2-2 7H9l-1-1H5z" fill="#48d048" stroke="#208828" strokeWidth="0.8" /> },
  { name: 'Cruz', icon: <path d="M5 6l3-2 4 4 4-4 3 2-4 5 4 5-3 2-4-4-4 4-3-2 4-5z" fill="#f01818" /> },
  { name: 'Aviso', icon: <><path d="M12 4l8 14H4z" fill="#ffb030" stroke="#c87810" strokeLinejoin="round" /><path d="M12 9v4M12 15v1.5" stroke="#333" strokeWidth="1.8" /></> },
];

function DrawingTools() {
  return (
    <nav className="flex w-7 shrink-0 flex-col border-l-2 border-r border-l-[#587683] border-r-[#6b8792] bg-[#9cb9c6]" aria-label="Herramientas">
      <button className="flex h-3 shrink-0 items-center justify-center border-b border-[#8aa7b4]" aria-label="Subir">
        <svg width="8" height="4" viewBox="0 0 8 4"><path d="M1 3l3-2 3 2" fill="none" stroke="#5a7682" /></svg>
      </button>
      <div className="min-h-0 flex-1 overflow-hidden">
        {TOOLS.map((tool) => (
          <button
            key={tool.name}
            title={tool.name}
            className={`block h-[22px] w-6 ${tool.active ? 'rounded-sm border border-[#71838c] bg-[#8fa3ad]' : ''}`}
          >
            <svg className="h-full w-full" viewBox="0 0 24 22" fill="black">
              {tool.icon}
            </svg>
          </button>
        ))}
      </div>
      <button className="flex h-3 shrink-0 items-center justify-center border-y border-[#6b8792] bg-[#b4cfdb]" aria-label="Bajar">
        <svg width="8" height="4" viewBox="0 0 8 4"><path d="M1 1l3 2 3-2" fill="none" stroke="#222" strokeWidth="1.5" /></svg>
      </button>
      <button className="h-[28px] shrink-0" aria-label="Plantillas">
        <svg width="24" height="28" viewBox="0 0 24 28">
          <path d="M8 6h8l3 3v11H8z" fill="#f4f4f4" stroke="#777" />
          <circle cx="8" cy="8" r="4" fill="#189818" />
          <path d="M7 7l1-1v4" fill="none" stroke="#fff" />
          <path d="M10 12l3 3 4-4" fill="none" stroke="#e04040" />
          <path d="M11 20l5-5M14 13l2 2 3-1M16 15l4 4" fill="none" stroke="#222" strokeWidth="1.5" />
          <path d="M16 22h5l-2.500 3z" fill="#000" />
        </svg>
      </button>
      <button className="h-[26px] shrink-0" aria-label="Más">
        <svg width="24" height="26" viewBox="0 0 24 26">
          <g fill="#222"><circle cx="7" cy="12" r="1.5" /><circle cx="12" cy="12" r="1.5" /><circle cx="17" cy="12" r="1.5" /><path d="M14 16h5l-2.500 3z" /></g>
        </svg>
      </button>
    </nav>
  );
}

/* ---------- top toolbar ---------- */

function Chevron({ className = '' }: { className?: string }) {
  return (
    <svg width="7" height="5" viewBox="0 0 7 5" className={className}>
      <path d="M1 1l2.500 2.500L6 1" fill="none" stroke="#111" strokeWidth="1.3" />
    </svg>
  );
}

function Dropdown({ label, value, width, text }: { label: string; value: string; width: string; text: string }) {
  return (
    <div className={`relative flex h-full items-center border-l border-[#6b8792] ${width}`}>
      <select aria-label={label} className={`h-full w-full cursor-pointer appearance-none bg-transparent font-bold ${text}`}>
        <option>{value}</option>
      </select>
      <Chevron className="pointer-events-none absolute right-[6px]" />
    </div>
  );
}

function Preset({ label, width, active }: { label: string; width: string; active?: boolean }) {
  return (
    <button
      className={`h-4 rounded-[3px] border border-[#71909d] text-center font-bold ${width} ${active ? 'bg-[#8aa2ae]' : 'bg-[#adc9d5]'}`}
    >
      {label}
    </button>
  );
}

function Toolbar() {
  return (
    <header className="flex h-[22px] shrink-0 items-center border-b-2 border-[#4c6774] bg-linear-to-b from-[#b9d7e4] to-[#9bb9c6] text-[9px] leading-none">
      <svg width="22" height="20" viewBox="0 0 22 20" className="shrink-0">
        <path d="M7.500 7v9M12.500 5v9M17.500 3v9" stroke="#1a7a28" />
        <path d="M6 9h3v5H6zM11 7h3v5h-3zM16 5h3v5h-3z" fill="#28a838" />
      </svg>
      <span className="flex h-full w-4 items-center justify-center border-l border-[#6b8792]">
        <svg width="8" height="14" viewBox="0 0 8 14" fill="none" stroke="#7b8d96">
          <path d="M1.500 6V1.500h2V6M4.500 6V1.500h2V6M1.500 8v4.500h2V8M4.500 8v4.500h2V8" />
        </svg>
      </span>
      <Dropdown label="Valor" value="USDJPY" width="w-[58px]" text="pl-[5px]" />
      <div className="flex h-full items-center gap-1 border-l border-[#6b8792] px-[3px]">
        <Preset label="144s" width="w-[25px]" />
        <Preset label="12m" width="w-[23px]" />
        <Preset label="56m" width="w-[23px]" />
        <Preset label="1h" width="w-4" />
        <Preset label="4h" width="w-4" />
        <Preset label="D" width="w-3" />
        <Preset label="W" width="w-[14px]" />
        <Preset label="M" width="w-[13px]" active />
        <Preset label="Q" width="w-3" />
      </div>
      <Dropdown label="Periodo" value="1 mes" width="w-[47px]" text="pl-[5px]" />
      <div className="flex h-full items-center gap-1 border-l border-[#6b8792] px-[3px]">
        <Preset label="5kU" width="w-[23px]" />
        <Preset label="10kU" width="w-[27px]" active />
      </div>
      <Dropdown label="Unidades" value="10 k unidades" width="w-[84px]" text="pl-[4px]" />
      <button className="flex h-full w-[85px] items-center gap-1 border-l border-[#6b8792] pl-[5px] font-bold">
        <svg width="16" height="16" viewBox="0 0 16 16">
          <path d="M1 6q3-6 7-1t7 2" fill="none" stroke="#e05050" strokeWidth="1.2" />
          <path d="M1 8q4-1 6-5t8 5" fill="none" stroke="#28a838" strokeWidth="1.2" />
          <path d="M1 16v-5h3v2h3v3zM11 16v-4h4v4z" fill="#18c018" />
          <path d="M5 12h2v2h2v-2h2v4H5z" fill="#e01818" />
        </svg>
        Indicadores
      </button>
      <button className="flex h-full w-3 items-center justify-center border-x border-[#6b8792]" aria-label="Más indicadores">
        <Chevron />
      </button>
      <span className="ml-2 flex h-[10px] w-[10px] items-center justify-center bg-[#f4f4f4] font-bold text-[#8a8a8a]">i</span>
      <span className="ml-[9px] h-2 w-2 rounded-full border border-[#999] bg-[#808080]" />
      <span className="ml-1 flex h-[14px] w-10 items-center justify-center rounded-sm border border-[#38c038] bg-[#55e355] text-[10px] text-white">+0,01 %</span>
      <time className="ml-1 w-[53px] font-bold" dateTime="2025-08-29">29 ago 2025</time>
      <span className="ml-1 flex h-[14px] w-[47px] items-center justify-center rounded-[3px] border border-[#3c94cc] bg-[#5fbbe9] text-[10px]">USD/JPY</span>
      <div className="ml-auto flex h-full items-center">
        <button className="flex h-full w-5 items-center justify-center border-x border-[#6b8792]" aria-label="Sincronizar">
          <svg width="15" height="15" viewBox="0 0 15 15" fill="none" strokeWidth="3">
            <path d="M8 2.500Q4 2.500 4 8" stroke="#f05050" />
            <path d="M0 7h8l-4 5z" fill="#f05050" />
            <path d="M7 12.500q4 0 4-5.500" stroke="#18b828" />
            <path d="M7 8h8l-4-5z" fill="#18b828" />
          </svg>
        </button>
        <button className="flex h-full w-4 items-center justify-center" aria-label="Minimizar">
          <svg width="10" height="10" viewBox="0 0 10 10"><path d="M1 8.500h8" stroke="#6f8893" strokeWidth="2" /></svg>
        </button>
        <button className="flex h-full w-[14px] items-center justify-center" aria-label="Restaurar">
          <svg width="10" height="10" viewBox="0 0 10 10" fill="none" stroke="#6f8893"><path d="M1.500 4.500h5v4h-5zM3.500 4V1.500h5v5H7" /></svg>
        </button>
        <button className="flex h-full w-4 items-center justify-center" aria-label="Cerrar">
          <svg width="10" height="10" viewBox="0 0 10 10"><path d="M1 1l8 8M9 1L1 9" stroke="#6f8893" strokeWidth="1.8" /></svg>
        </button>
      </div>
    </header>
  );
}

/* ---------- legend over the price pane ---------- */

function Legend() {
  return (
    <div className="absolute left-0 top-0 flex h-[15px] items-center border-b border-r border-[#6b8792] bg-[#cbdce4] text-[9px] font-bold leading-none">
      <div className="flex h-full w-[31px] items-center gap-1 bg-[#dfe9ee] pl-[3px]">
        <svg width="11" height="12" viewBox="0 0 11 12"><path d="M.5.5h7l3 3v8H.5z" fill="#fff" stroke="#8fb0cc" /><path d="M4 2h3v4h3l-4.500 4L1 6h3z" fill="#e82020" /></svg>
        <svg width="11" height="12" viewBox="0 0 11 12"><path d="M.5.5h7l3 3v8H.5z" fill="#fff" stroke="#8fb0cc" /><path d="M4 10h3V6h3L5.500 2 1 6h3z" fill="#18a818" /></svg>
      </div>
      <label className="flex h-full w-[46px] items-center gap-[5px] border-l border-[#6b8792] pl-[3px]">
        <input type="checkbox" className="h-2 w-2 appearance-none border border-[#777] bg-[#eef3f5]" />
        Precio
      </label>
      <button className="flex h-full w-[18px] items-center justify-center border-l border-[#6b8792]" aria-label="Lista">
        <svg width="10" height="9" viewBox="0 0 10 9"><path d="M0 1.500h2M0 4.500h2M0 7.500h2M3 1.500h7M3 4.500h7M3 7.500h7" stroke="#333" /></svg>
      </button>
      <label className="flex h-full w-[64px] items-center gap-[5px] border-l border-[#6b8792] pl-[3px]">
        <input type="checkbox" className="h-2 w-2 appearance-none border border-[#777] bg-[#eef3f5]" />
        Cierre (W)
      </label>
      <span className="flex h-full w-[137px] items-center gap-[5px] border-l border-[#6b8792] pl-[3px]">
        <span className="h-2 w-2 bg-[#6f8893]" />
        Tunel Domenec v4 (t t t t t)
      </span>
      <span className="flex h-full w-[115px] items-center gap-[5px] border-l border-[#6b8792] pl-[3px]">
        <svg width="8" height="9" viewBox="0 0 8 9"><path d="M0 0h1v9H0zM3 0h1v9H3z" fill="#000" /><path d="M1 0h2v9H1z" fill="#e8e020" /><path d="M4 0h2v9H4z" fill="#e82020" /><path d="M6 0h2v9H6z" fill="#505010" /></svg>
        Control Total Doc v.6
      </span>
      <span className="flex h-full w-[140px] items-center gap-[5px] border-l border-[#6b8792] pl-[3px]">
        <span className="h-2 w-2 bg-black" />
        Multi Avisos (3 f 3 1,5 70 f f)
      </span>
    </div>
  );
}

/* ---------- bottom bar ---------- */

const BOTTOM_LEFT: [string, ReactNode][] = [
  ['Compartir', <><path d="M4 9l7-5M4 9l6 4" stroke="#fff" strokeWidth="1.5" /><g fill="#fff"><circle cx="4" cy="9" r="2.5" /><circle cx="11" cy="4" r="2" /><circle cx="10" cy="13" r="2" /></g><path d="M11 13h5l-2.500 3z" fill="#000" /></>],
  ['Chat', <><path d="M3 2h8l3 3v6H3z" fill="#a8c4f0" stroke="#5080d0" /><path d="M5 7h11v6h-4l-2 3v-3H5z" fill="#2868d8" /><path d="M7 10h7" stroke="#fff" strokeDasharray="1 2" /></>],
  ['Informe', <><path d="M4 2h10v14H4z" fill="#f4f4f4" stroke="#555" /><path d="M6 5h6M6 7h4M6 11h4" stroke="#333" /><path d="M6 9l5 3 2-4" stroke="#e02020" fill="none" /><path d="M9 13h5v3z" fill="#18a818" /></>],
  ['Libro de órdenes', <><path d="M3 2h7v3H3zM5 7h5v3H5zM2 12h8v3H2z" fill="#20a030" /><path d="M10 3h4v3h-4zM10 8h6v3h-6zM10 12h3v3h-3z" fill="#e03030" /><path d="M10 1v16" stroke="#333" /></>],
  ['Ventanas', <><rect x="2.5" y="2.5" width="10" height="8" fill="#fff" stroke="#2868d8" strokeWidth="1.5" /><rect x="6.5" y="7.5" width="10" height="8" fill="#fff" stroke="#2868d8" strokeWidth="1.5" /><path d="M8 13l2-3 2 3 3-4" fill="none" stroke="#18a818" /></>],
];

const lens = (
  <>
    <circle cx="7" cy="7" r="4.5" fill="#e4eef8" stroke="#555" />
    <path d="M10 10l5 6" stroke="#111" strokeWidth="2" />
  </>
);

const BOTTOM_RIGHT: [string, ReactNode][] = [
  ['Deshacer', <><path d="M5 7q9-1 8 8" fill="none" stroke="#1868d8" strokeWidth="2.5" /><path d="M7 2v10L1 7z" fill="#1868d8" /></>],
  ['Rehacer', <><path d="M13 7q-9-1-8 8" fill="none" stroke="#78a4d0" strokeWidth="2.5" /><path d="M11 2v10l6-5z" fill="#78a4d0" /></>],
  ['Órdenes', <><path d="M3 8h5v8H3z" fill="#e05050" stroke="#802020" /><path d="M9 3h6v10H9z" fill="#38d048" stroke="#186820" /><path d="M5 14l7-9M6 10l4 3" stroke="#fff" strokeWidth="2" /></>],
  ['Ajustar', <>{lens}<path d="M16 2v8M14 4l2-2 2 2M1 16h9M3 14l-2 2 2 1" stroke="#1840e0" fill="none" /></>],
  ['Alejar', <>{lens}<path d="M5 7h4" stroke="#1840e0" strokeWidth="1.5" /></>],
  ['Acercar', <>{lens}<path d="M5 7h4M7 5v4" stroke="#1840e0" strokeWidth="1.5" /></>],
  ['Ir al final', <><path d="M2 4h16M2 7h16" stroke="#333" strokeDasharray="2 1" /><path d="M10 9v4M7 12h6l-3 4z" stroke="#1868d8" fill="#1868d8" /></>],
];

function BottomBar() {
  return (
    <footer className="flex h-[18px] shrink-0 items-center border-t border-[#6b8792] bg-[#9cb9c6]">
      <button className="flex h-full w-7 items-center justify-center border-l-2 border-r border-l-[#587683] border-r-[#6b8792] bg-[#8fa8b4]" aria-label="Dibujar">
        <svg width="18" height="16" viewBox="0 0 18 16"><path d="M1 3l5 9 2-8 2 9" fill="none" stroke="#d03030" /><path d="M2 13l12 1" stroke="#18a818" strokeWidth="1.5" /><path d="M8 12l1-4 6-7 2 2-6 8z" fill="#ffd820" stroke="#806000" strokeWidth="0.8" /></svg>
      </button>
      <div className="flex h-full items-center gap-[3px] pl-px">
        {BOTTOM_LEFT.map(([name, icon]) => (
          <button key={name} title={name} className="h-[17px] w-[18px]">
            <svg width="18" height="17" viewBox="0 0 18 18">{icon}</svg>
          </button>
        ))}
      </div>
      <button className="ml-[2px] w-[14px]" aria-label="Plegar">
        <svg width="9" height="8" viewBox="0 0 9 8"><path d="M4 1L1 4l3 3M8 1L5 4l3 3" fill="none" stroke="#333" /></svg>
      </button>
      <div className="mt-px flex h-[13px] min-w-0 flex-1 border border-[#6b8792]">
        <button className="flex w-3 shrink-0 items-center justify-center border-r border-[#6b8792] bg-[#b4cfdb]" aria-label="Desplazar a la izquierda">
          <svg width="4" height="6" viewBox="0 0 4 6"><path d="M3 1L1 3l2 2" fill="none" stroke="#111" strokeWidth="1.3" /></svg>
        </button>
        <div className="flex-[812] bg-[#9ab6c3]" />
        <div className="flex-[733] border-x border-[#6b8792] bg-linear-to-b from-[#b9dce8] to-[#a0c0ce]" />
        <div className="flex-[46] bg-[#9ab6c3]" />
        <button className="flex w-3 shrink-0 items-center justify-center border-l border-[#6b8792] bg-[#b4cfdb]" aria-label="Desplazar a la derecha">
          <svg width="4" height="6" viewBox="0 0 4 6"><path d="M1 1l2 2-2 2" fill="none" stroke="#111" strokeWidth="1.3" /></svg>
        </button>
      </div>
      <div className="flex h-full w-[150px] shrink-0 items-center justify-between overflow-hidden pl-[6px]">
        {BOTTOM_RIGHT.map(([name, icon]) => (
          <button key={name} title={name} className="h-[17px] w-[18px] shrink-0">
            <svg width="18" height="17" viewBox="0 0 18 18">{icon}</svg>
          </button>
        ))}
      </div>
    </footer>
  );
}

export default function App() {
  return (
    <div className="flex h-screen flex-col overflow-hidden bg-white font-['Liberation_Sans',Arial,sans-serif] text-black">
      <Toolbar />
      <div className="flex min-h-0 flex-1">
        <DrawingTools />
        <main className="flex min-w-0 flex-1 flex-col">
          <Pane
            top={22}
            className="min-h-0 flex-1"
            axis={<PriceAxis />}
            overlay={
              <>
                <Legend />
                <h1 className="absolute left-[10px] top-[14px] text-[23px] font-bold leading-[28px]">
                  M
                  <br />
                  USD/JPY
                </h1>
              </>
            }
          >
            <PriceChart />
          </Pane>
          <Pane
            top={627}
            className="h-[139px] shrink-0"
            axis={<StochAxis />}
            overlay={
              <PaneTitle icon="border-r-4 border-black bg-[#6f8893]" width="w-[150px]">
                Sistema de trenes Doc v4 (f f)
              </PaneTitle>
            }
          >
            <StochChart />
          </Pane>
          <Pane
            top={766}
            className="h-[82px] shrink-0"
            axis={<WillyAxis />}
            overlay={<PaneTitle icon="bg-[#6f8893]" width="w-[74px]">Willy Doc (t)</PaneTitle>}
          >
            <WillyChart />
          </Pane>
          <Pane
            top={848}
            className="h-[82px] shrink-0"
            axis={<AwesomeAxis />}
            overlay={<PaneTitle icon="bg-[#6f8893]" width="w-[127px]">Awesome Evolution Doc</PaneTitle>}
          >
            <AwesomeChart />
          </Pane>
          <Pane
            top={930}
            className="h-[65px] shrink-0"
            axis={<ForceAxis />}
            overlay={
              <PaneTitle icon="border-l-4 border-black bg-[#6f8893]" width="w-[176px]">
                Barra Fuerza Fondo Mercado v4 (f)
              </PaneTitle>
            }
          >
            <ForceChart />
          </Pane>
          <TimeAxis />
        </main>
      </div>
      <BottomBar />
    </div>
  );
}
